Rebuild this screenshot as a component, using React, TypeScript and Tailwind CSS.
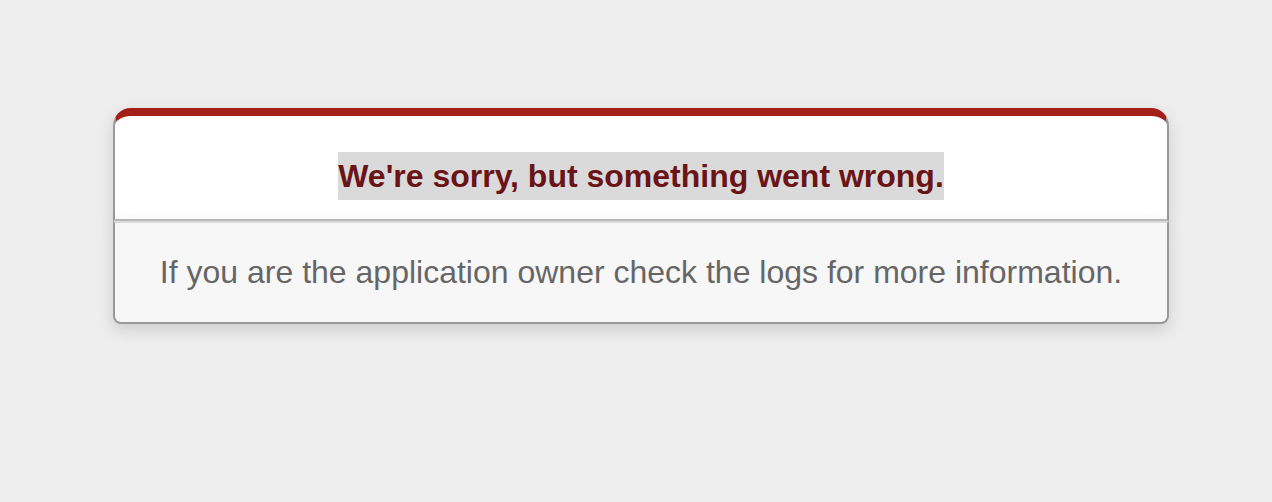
import React from "react";

export default function App() {
  return (
    <div
      className="min-h-screen bg-[#eeeeee] pt-[108px] text-center"
      style={{ fontFamily: '"Liberation Sans", Arial, sans-serif' }}
    >
      <div className="ml-[113px] w-[1056px]">
        <div className="rounded-t-[18px] border-2 border-t-[8px] border-[#cccccc] border-x-[#999999] border-b-[#bbbbbb] border-t-[#a31f17] bg-white px-[12%] pt-[14px] shadow-[0_6px_16px_rgba(50,50,50,0.17)]">
          <h1 className="mt-[22px] mb-[19px] text-[32px] font-bold leading-[48px] text-[#6b1417]">
            <span className="inline-block bg-[#dadada]">We're sorry, but something went wrong.</span>
          </h1>
        </div>
        <p className="rounded-b-[8px] border-2 border-[#999999] border-t-[#dadada] bg-[#f7f7f7] p-[32px] text-[32px] leading-[35px] text-[#666666] shadow-[0_6px_16px_rgba(50,50,50,0.17)]">
          If you are the application owner check the logs for more information.
        </p>
      </div>
    </div>
  );
}
